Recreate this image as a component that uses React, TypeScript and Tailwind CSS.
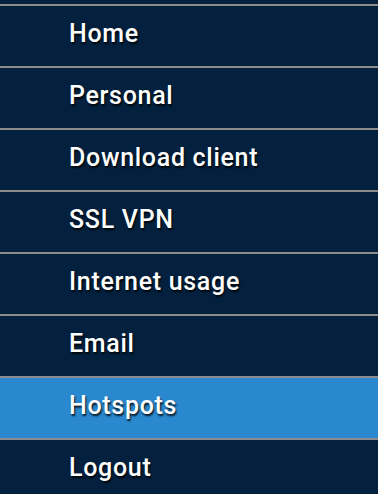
import React from "react";

const items = ["Home", "Personal", "Download client", "SSL VPN", "Internet usage", "Email", "Hotspots", "Logout"];

export default function App() {
  return (
    <div className="w-[378px] h-[494px] overflow-hidden bg-[#03213f]" style={{ fontFamily: "Roboto, 'Liberation Sans', sans-serif" }}>
      <div className="h-[4px]" />
      {items.map((it) => (
        <div key={it} className="border-t-2 border-[#8c8c8c]">
          <div
            className={`h-[60px] flex items-center pl-[69px] pb-[4px] text-white text-[25px] font-medium tracking-[0.7px] ${it === "Hotspots" ? "bg-[#2a88cf]" : "bg-[#03213f]"} [text-shadow:1px_2px_2px_rgba(0,0,0,0.85)]`}
          >
            {it}
          </div>
        </div>
      ))}
    </div>
  );
}
